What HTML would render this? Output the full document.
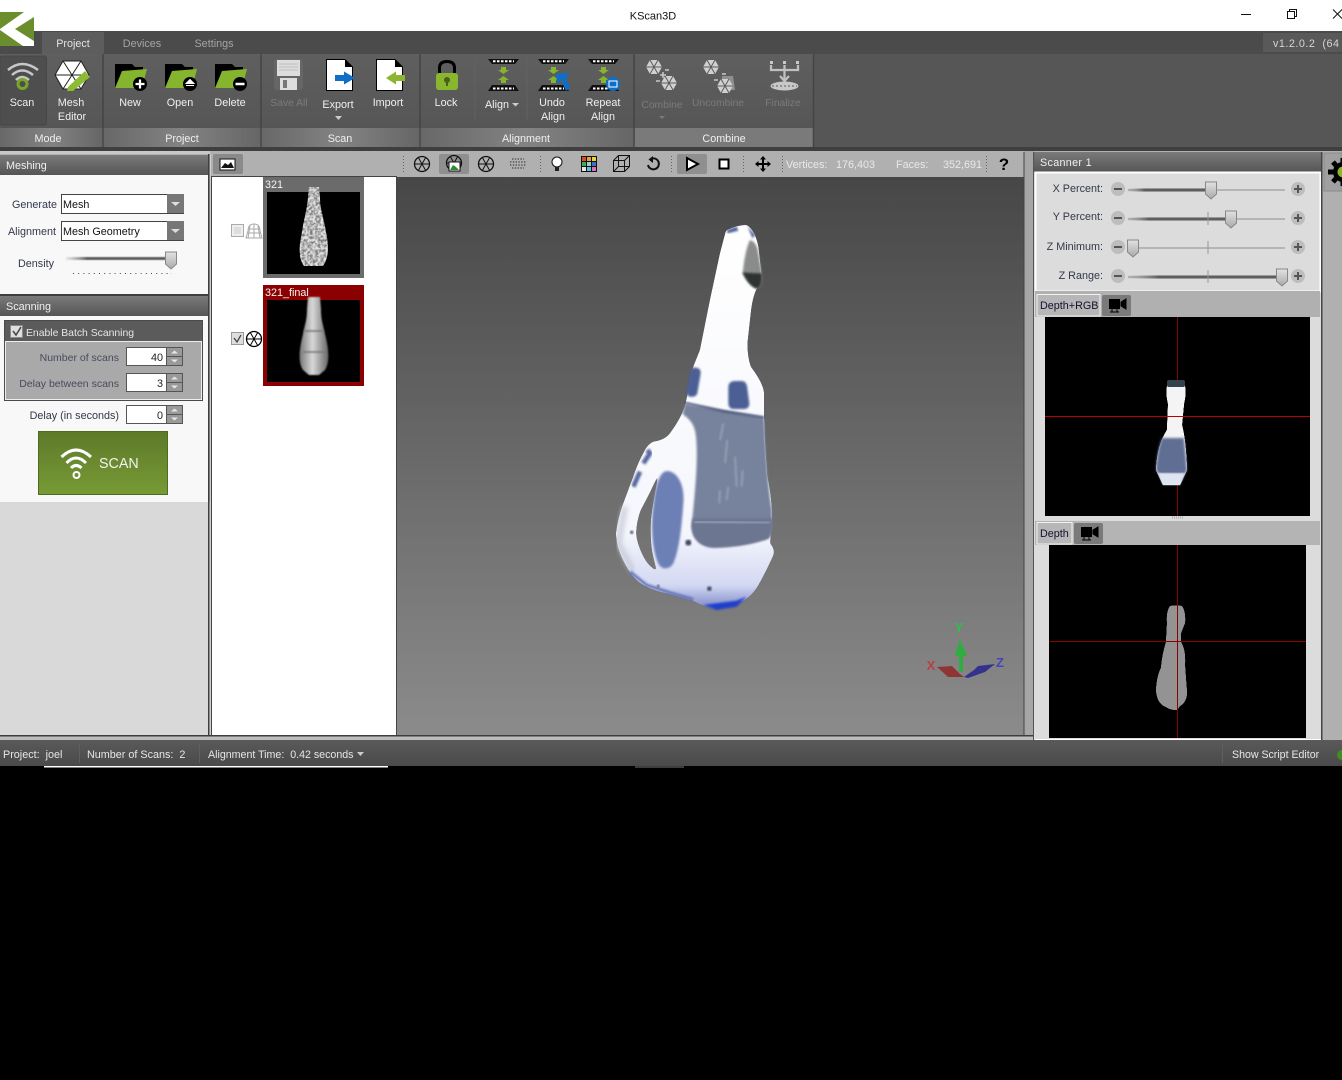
<!DOCTYPE html>
<html><head><meta charset="utf-8"><title>KScan3D</title>
<style>
html,body{margin:0;padding:0;background:#000;width:1342px;height:1080px;overflow:hidden}
svg{display:block;font-family:"Liberation Sans",sans-serif;font-size:10.8px}
.w{fill:#f0f0f0}.d{fill:#7d7d7d}.k{fill:#33384a}.m{text-anchor:middle}.e{text-anchor:end}.dis{fill:#7b7b7b;font-size:10.3px}
</style></head><body>
<svg width="1342" height="1080" viewBox="0 0 1342 1080" xmlns="http://www.w3.org/2000/svg">
<defs>
<linearGradient id="hdr" x1="0" y1="0" x2="0" y2="1"><stop offset="0" stop-color="#7a7a7a"/><stop offset="1" stop-color="#555"/></linearGradient>
<linearGradient id="rib" x1="0" y1="0" x2="0" y2="1"><stop offset="0" stop-color="#5f5f5f"/><stop offset="1" stop-color="#565656"/></linearGradient>
<linearGradient id="grp" x1="0" y1="0" x2="1" y2="0"><stop offset="0" stop-color="#686868"/><stop offset=".5" stop-color="#838383"/><stop offset="1" stop-color="#666"/></linearGradient>
<linearGradient id="vp" x1="0" y1="0" x2="0" y2="1"><stop offset="0" stop-color="#474747"/><stop offset="1" stop-color="#8b8b8b"/></linearGradient>
<linearGradient id="scan" x1="0" y1="0" x2="0" y2="1"><stop offset="0" stop-color="#5d7a2a"/><stop offset="1" stop-color="#789a35"/></linearGradient>
<linearGradient id="st" x1="0" y1="0" x2="0" y2="1"><stop offset="0" stop-color="#5a5a5a"/><stop offset="1" stop-color="#4a4a4a"/></linearGradient>
<linearGradient id="body" x1="0" y1="0" x2="0" y2="1"><stop offset="0" stop-color="#fff"/><stop offset=".8" stop-color="#f6f7fd"/><stop offset=".94" stop-color="#d3d8f2"/><stop offset="1" stop-color="#7d88c8"/></linearGradient>
<linearGradient id="thumb" x1="0" y1="0" x2="0" y2="1"><stop offset="0" stop-color="#e2e2e2"/><stop offset="1" stop-color="#a9a9a9"/></linearGradient>
<linearGradient id="trk" x1="0" y1="0" x2="1" y2="0"><stop offset="0" stop-color="#999" stop-opacity=".2"/><stop offset=".2" stop-color="#555"/><stop offset="1" stop-color="#555"/></linearGradient>
<linearGradient id="fin" x1="0" y1="0" x2="1" y2="0"><stop offset="0" stop-color="#777"/><stop offset=".45" stop-color="#d8d8d8"/><stop offset="1" stop-color="#666"/></linearGradient>
<filter id="b1" color-interpolation-filters="sRGB"><feGaussianBlur stdDeviation="1.2"/></filter>
<filter id="b2" color-interpolation-filters="sRGB"><feGaussianBlur stdDeviation=".7"/></filter>
<filter id="b3" color-interpolation-filters="sRGB"><feGaussianBlur stdDeviation="3"/></filter>
<filter id="b4" color-interpolation-filters="sRGB"><feGaussianBlur stdDeviation="8"/></filter>
<filter id="gooA" color-interpolation-filters="sRGB" x="-10%" y="-10%" width="120%" height="120%"><feGaussianBlur stdDeviation="3"/><feColorMatrix values="1 0 0 0 0 0 1 0 0 0 0 0 1 0 0 0 0 0 8 -3.400"/></filter>
<filter id="gooB" color-interpolation-filters="sRGB" x="-20%" y="-10%" width="140%" height="120%"><feGaussianBlur stdDeviation=".9"/><feColorMatrix values="1 0 0 0 0 0 1 0 0 0 0 0 1 0 0 0 0 0 10 -4"/></filter>
<filter id="sp" color-interpolation-filters="sRGB" x="0" y="0" width="100%" height="100%"><feTurbulence type="fractalNoise" baseFrequency=".38" numOctaves="2" seed="4"/><feColorMatrix values="0 0 0 0 0  0 0 0 0 0  0 0 0 0 0  2.600 0 0 0 -.7" result="n"/><feFlood flood-color="#e2e2e2"/><feComposite in2="n" operator="in" result="s"/><feMerge result="m"><feMergeNode in="SourceGraphic"/><feMergeNode in="s"/></feMerge><feComposite in="m" in2="SourceAlpha" operator="in"/></filter>
<g id="hex"><circle r="7.500" fill="none" stroke="currentColor" stroke-width="1.300"/><path d="M-3.700-6.500 3.700 6.500M3.700-6.500-3.700 6.500M-7.500 0H7.500" stroke="currentColor" stroke-width="1"/></g>
<g id="folder"><path d="M0 1H17L20 4H28V25H0Z" fill="#000"/><path d="M7 8 32 6 27 25H0Z" fill="#85b52f"/><circle cx="25" cy="21" r="7" fill="#000"/></g>
<g id="align"><path d="M0 0H31L27 5H4Z" fill="#111"/><path d="M4 26H27L31 32H0Z" fill="#111"/><path d="M5 2.200H26M5 29.500H26" stroke="#fff" stroke-width="2" stroke-dasharray="2.500 1.500" fill="none"/><path d="M13 8H18V11H21L15.500 15 10 11H13Z" fill="#85b52f"/><path d="M13 24H18V21H21L15.500 17 10 21H13Z" fill="#85b52f"/></g>
<g id="comb"><path d="M-4-7H4L8 0 4 7H-4L-8 0Z" fill="#d0d0d0"/><path d="M-4-7 4 7M4-7-4 7M-8 0H8" stroke="#5b5b5b"/></g>
<g id="cam"><rect x="0" y="0" width="29" height="21" rx="2" fill="#7a7a7a"/><rect x="7" y="4" width="11" height="10" fill="#000"/><path d="M19 7 24 4V14L19 11ZM8 17H17M10 14V17M15 14V17" fill="#000" stroke="#000"/></g>
<g id="plus"><circle r="7" fill="#bdbdbd"/><path d="M-4 0H4M0-4V4" stroke="#555" stroke-width="2"/></g>
<g id="minus"><circle r="7" fill="#bdbdbd"/><path d="M-4 0H4" stroke="#555" stroke-width="2"/></g>
<path id="th" d="M-5.500-8H5.500V4L0 9-5.500 4Z" fill="url(#thumb)" stroke="#888"/>
<g id="spin"><rect x="0" y="0" width="57" height="19" fill="#555"/><rect x="1" y="1" width="39" height="17" fill="#fff"/><rect x="41" y="1" width="15" height="8" fill="#999"/><rect x="41" y="10" width="15" height="8" fill="#999"/><path d="M45 6.500 48.500 3.500 52 6.500Z" fill="#e8e8e8"/><path d="M45 12.500 48.500 15.500 52 12.500Z" fill="#e8e8e8"/></g>
<g id="drop"><rect width="17" height="19" fill="#777"/><path d="M4 8H13L8.500 12Z" fill="#ddd"/></g>
</defs>

<!-- window -->
<rect width="1342" height="1080" fill="#000"/>
<rect width="1342" height="31" fill="#fff"/>
<text x="653" y="19.500" class="m" fill="#111" font-size="11">KScan3D</text>
<path d="M1241 14.500H1251" stroke="#111"/>
<path d="M1287.500 11.500H1294.500V18.500H1287.500ZM1289.500 11V9.500H1296.500V16.500H1295" fill="none" stroke="#111"/>
<path d="M1333 9.500 1342 18.500M1342 9.500 1333 18.500" stroke="#111"/>

<!-- tab bar -->
<rect y="31" width="1342" height="23" fill="#4b4b4b"/>
<rect x="42" y="32" width="62" height="22" fill="#5d5d5d"/>
<text x="73" y="47" class="m" fill="#e4e4e4">Project</text>
<text x="142" y="47" class="m" fill="#a5a5a5">Devices</text>
<text x="214" y="47" class="m" fill="#a5a5a5">Settings</text>
<rect x="1263" y="33" width="79" height="19" fill="#595959"/>
<text x="1273" y="47" fill="#d4d4d4" letter-spacing=".5" xml:space="preserve" style="white-space:pre">v1.2.0.2  (64 b</text>
<!-- logo -->
<rect y="12" width="34" height="34" fill="#6b8e2c"/>
<path d="M0 29 24 12H34V17L15 29 34 41V46H23L0 30Z" fill="#fff"/>

<!-- ribbon -->
<rect y="54" width="1342" height="94" fill="#565656"/>
<rect y="54" width="813" height="74" fill="url(#rib)"/>
<rect y="128" width="813" height="19" fill="#777"/>
<rect y="128" width="102" height="19" fill="url(#grp)"/>
<rect x="104" y="128" width="156" height="19" fill="url(#grp)"/>
<rect x="262" y="128" width="157" height="19" fill="url(#grp)"/>
<rect x="421" y="128" width="212" height="19" fill="url(#grp)"/>
<rect x="635" y="128" width="178" height="19" fill="#7a7a7a"/>
<path d="M103 54V147M261 54V147M420 54V147M634 54V147M813.500 54V147" stroke="#444" stroke-width="1.500"/>
<path d="M475 58V120M527 58V120" stroke="#626262"/>
<text x="48" y="142" class="m w">Mode</text><text x="182" y="142" class="m w">Project</text><text x="340" y="142" class="m w">Scan</text><text x="526" y="142" class="m w">Alignment</text><text x="724" y="142" class="m w">Combine</text>

<!-- Scan btn -->
<rect x="0" y="56" width="46.500" height="69" rx="2" fill="#4e4e4e" stroke="#474747"/>
<path d="M8 70Q22 58 38 70M12 75Q22 66 33 75M16 80Q22 74 29 80" fill="none" stroke="#c7c7c7" stroke-width="2.500"/>
<circle cx="22.500" cy="84" r="4.500" fill="none" stroke="#7ca52b" stroke-width="3"/>
<text x="22" y="106" class="m w">Scan</text>
<!-- Mesh editor -->
<g transform="translate(72,75)"><path d="M-9-14H9L17 0 9 14H-9L-17 0Z" fill="#fff" stroke="#222"/><path d="M-9-14 9 14M9-14-9 14M-17 0H17" stroke="#222"/><path d="M-4 12 13-4 18 2 1 16-5 16Z" fill="#8dbb33"/></g>
<text x="71" y="106" class="m w">Mesh</text><text x="72" y="120" class="m w">Editor</text>
<!-- folders -->
<use href="#folder" x="115" y="63"/><path d="M135.500 84H144.500M140 79.500V88.500" stroke="#fff" stroke-width="2.200"/>
<text x="130" y="106" class="m w">New</text>
<use href="#folder" x="165" y="63"/><path d="M186 83.500 190 79.500 194 83.500ZM186 85.500H194" fill="#fff" stroke="#fff"/>
<text x="180" y="106" class="m w">Open</text>
<use href="#folder" x="215" y="63"/><path d="M235.500 84H244.500" stroke="#fff" stroke-width="2.500"/>
<text x="230" y="106" class="m w">Delete</text>
<!-- Save -->
<rect x="274" y="59" width="29" height="31" rx="3" fill="#666"/>
<rect x="277" y="60" width="23" height="16" fill="#ddd"/><path d="M279 64H298M279 67H298M279 70H298" stroke="#bdbdbd"/>
<rect x="280" y="78" width="17" height="12" fill="#ddd"/><rect x="283" y="80" width="4" height="8" fill="#777"/>
<text x="289" y="106" class="m dis">Save All</text>
<!-- Export -->
<path d="M326.500 59.500H345L352.500 67V90.500H326.500Z" fill="#fff" stroke="#000"/><path d="M345 59.500V67H352.500Z" fill="#000"/>
<path d="M335 75H344V71.500L355 78 344 84.500V81H335Z" fill="#0f6fc6"/>
<text x="338" y="108" class="m w">Export</text><path d="M335 116H342L338.500 120Z" fill="#ccc"/>
<!-- Import -->
<path d="M376.500 59.500H395L402.500 67V90.500H376.500Z" fill="#fff" stroke="#000"/><path d="M395 59.500V67H402.500Z" fill="#000"/>
<path d="M405 75H396V71.500L386 78 396 84.500V81H405Z" fill="#8ab52f"/>
<text x="388" y="106" class="m w">Import</text>
<!-- Lock -->
<path d="M439.500 74V68Q439.500 61.500 447 61.500T454.500 68V74" fill="none" stroke="#000" stroke-width="3"/>
<rect x="436" y="73" width="22" height="17" rx="3" fill="#8ab52f"/><circle cx="447" cy="80" r="3" fill="#47601a"/><rect x="446" y="81" width="2" height="5" fill="#47601a"/>
<text x="446" y="106" class="m w">Lock</text>
<!-- Align -->
<use href="#align" x="488" y="59"/><text x="497" y="108" class="m w">Align</text><path d="M512 103H519L515.500 106.500Z" fill="#ccc"/>
<use href="#align" x="538" y="59"/><path d="M556 74 570 73 566 78 570 88 566 91 561 80 557 84Z" fill="#0f6fc6"/><text x="552" y="106" class="m w">Undo</text><text x="553" y="120" class="m w">Align</text>
<use href="#align" x="588" y="59"/><circle cx="613" cy="84" r="7" fill="#0f6fc6"/><rect x="609" y="81" width="8" height="6" fill="none" stroke="#fff"/><text x="603" y="106" class="m w">Repeat</text><text x="603" y="120" class="m w">Align</text>
<!-- Combine -->
<use href="#comb" x="654" y="67"/><use href="#comb" x="669" y="83"/><path d="M660 75H666M663 72V78M656 81H660M665 70H669" stroke="#c8c8c8" stroke-width="1.500"/>
<text x="662" y="108" class="m dis">Combine</text><path d="M659 116H665L662 119Z" fill="#7b7b7b"/>
<use href="#comb" x="711" y="67"/><path d="M722 74H726M714 80H718" stroke="#c8c8c8" stroke-width="1.500"/><path d="M722 76H733L735 90H721Z" fill="#8f8f8f"/><use href="#comb" x="725" y="86"/>
<text x="718" y="106" class="m dis">Uncombine</text>
<path d="M770 61H773V64H770ZM783 61H786V64H783ZM796 61H799V64H796Z" fill="#c8c8c8"/>
<path d="M771 65V70H798V65M784.500 65V80M780 76 784.500 81 789 76" fill="none" stroke="#c0c0c0" stroke-width="2.300"/>
<ellipse cx="784.500" cy="86" rx="14" ry="4.500" fill="#c8c8c8"/><path d="M772 86H797" stroke="#5b5b5b" stroke-dasharray="2 2"/>
<text x="783" y="106" class="m dis">Finalize</text>

<rect y="147" width="1342" height="4" fill="#3f3f3f"/>
<!-- main bg -->
<rect y="151" width="1342" height="584" fill="#b0b0b0"/>
<rect x="1024" y="151" width="10" height="589" fill="#a6a6a6"/>
<rect y="151" width="210" height="3" fill="#c9c9c9"/>

<!-- left panel -->
<rect y="502" width="210" height="233" fill="#d9d9d9"/>
<rect y="155" width="208" height="20" fill="url(#hdr)"/>
<text x="6" y="169" class="w">Meshing</text>
<rect y="175" width="208" height="119" fill="#f8f8f8"/>
<text x="57" y="208" class="e k">Generate</text>
<rect x="61.500" y="194.500" width="122" height="19" fill="#fff" stroke="#444"/><text x="63" y="208" fill="#111">Mesh</text><use href="#drop" x="167" y="194"/>
<text x="56" y="235" class="e k">Alignment</text>
<rect x="61.500" y="221.500" width="122" height="19" fill="#fff" stroke="#444"/><text x="63" y="235" fill="#111">Mesh Geometry</text><use href="#drop" x="167" y="221"/>
<text x="18" y="267" class="k">Density</text>
<rect x="66" y="257" width="106" height="3" fill="url(#trk)" filter="url(#b2)"/>
<use href="#th" x="171" y="260"/>
<path d="M73 273.500H172" stroke="#444" stroke-dasharray="1 4.200"/>
<rect y="294" width="208" height="2" fill="#3f3f3f"/>
<rect y="296" width="208" height="20" fill="url(#hdr)"/>
<text x="6" y="310" class="w">Scanning</text>
<rect y="316" width="208" height="186" fill="#f8f8f8"/>
<rect x="4.500" y="320.500" width="198" height="80" fill="#a9a9a9" stroke="#4a4a4a"/>
<rect x="5" y="321" width="197" height="20" fill="#5b5b5b"/>
<rect x="5.500" y="341.500" width="196" height="58" fill="#a9a9a9" stroke="#eee"/>
<rect x="10.500" y="325.500" width="12" height="12" fill="#dedede" stroke="#888"/><path d="M13 331 16 335 21 327" fill="none" stroke="#444" stroke-width="1.500"/>
<text x="26" y="336" fill="#e6e6e6" font-size="10.400">Enable Batch Scanning</text>
<text x="119" y="361" class="e" fill="#454c5c" font-size="10.500">Number of scans</text><use href="#spin" x="126" y="347"/><text x="163" y="361" class="e" fill="#222">40</text>
<text x="119" y="387" class="e" fill="#454c5c" font-size="10.500">Delay between scans</text><use href="#spin" x="126" y="373"/><text x="163" y="387" class="e" fill="#222">3</text>
<text x="119" y="419" class="e k">Delay (in seconds)</text><use href="#spin" x="126" y="405"/><text x="163" y="419" class="e" fill="#222">0</text>
<rect x="38.500" y="431.500" width="129" height="63" fill="url(#scan)" stroke="#4e6b1e"/>
<path d="M61.500 457Q76 443 91 457M66.500 463Q76 453 86 463M71 468Q76 463 81.500 468" fill="none" stroke="#fff" stroke-width="3"/>
<circle cx="76.500" cy="475" r="3" fill="none" stroke="#fff" stroke-width="2"/>
<text x="99" y="468" fill="#f2f2f2" font-size="14.300">SCAN</text>
<rect x="208" y="154" width="1.500" height="581" fill="#3f3f3f"/>
<rect x="210" y="154" width="1" height="581" fill="#cfcfcf"/>

<!-- toolbar -->
<rect x="213" y="154" width="30" height="20" rx="2" fill="#8a8a8a"/>
<rect x="220" y="159" width="15" height="11" fill="#fff" stroke="#111"/><path d="M221 168 225 163 228 165 231 162 234 168Z" fill="#111"/>
<g color="#111">
<path d="M403.500 156V172M540.500 156V172M671.500 156V172M743.500 156V172M782.500 156V172M986.500 156V172" stroke="#666" stroke-dasharray="1 2"/>
<use href="#hex" x="422" y="164"/>
<rect x="439" y="154" width="30" height="20" rx="2" fill="#8f8f8f"/>
<use href="#hex" x="454" y="163"/><rect x="449" y="162" width="11" height="9" fill="#fff" stroke="#111"/><path d="M450 170 453 165 456 167 459 170Z" fill="#2e8b2e"/>
<use href="#hex" x="486" y="164"/>
<g fill="none" stroke="#555" stroke-width="1.400" stroke-dasharray="1.400 1.400"><path d="M512 159H524M510 162H526M510 165H526M512 168H524"/></g>
<circle cx="557" cy="162" r="5" fill="#fff" stroke="#111"/><path d="M555 167H559V171H555Z" fill="#222"/>
<g><rect x="581" y="156" width="16" height="16" fill="#111"/>
<rect x="582" y="157" width="4" height="4" fill="#d94b2b"/><rect x="587" y="157" width="4" height="4" fill="#e9a030"/><rect x="592" y="157" width="4" height="4" fill="#e8d23c"/>
<rect x="582" y="162" width="4" height="4" fill="#48a84a"/><rect x="587" y="162" width="4" height="4" fill="#8bd7d0"/><rect x="592" y="162" width="4" height="4" fill="#3e6fc4"/>
<rect x="582" y="167" width="4" height="4" fill="#e7e7e7"/><rect x="587" y="167" width="4" height="4" fill="#5ec0e0"/><rect x="592" y="167" width="4" height="4" fill="#df6fb8"/></g>
<path d="M613.500 160.500H624.500V171.500H613.500ZM613.500 160.500 618.500 155.500H629.500V166.500L624.500 171.500M624.500 160.500 629.500 155.500M613.500 171.500 618.500 166.500H629.500M618.500 155.500V166.500" fill="none" stroke="#111"/>
<path d="M650 159.500A5.500 5.500 0 1 1 648 165" fill="none" stroke="#111" stroke-width="2"/><path d="M653 156V163L648.500 159.500Z" fill="#111"/>
<rect x="677" y="154" width="30" height="20" rx="2" fill="#8f8f8f"/>
<path d="M687 158V170L698 164Z" fill="#fff" stroke="#000" stroke-width="2"/>
<rect x="719.500" y="159.500" width="9" height="9" fill="#fff" stroke="#000" stroke-width="2"/>
<path d="M763 157.500V170.500M756.500 164H769.500" stroke="#000" stroke-width="2"/><path d="M763 156 766 159.500H760ZM763 172 766 168.500H760ZM755 164 758.500 161V167ZM771 164 767.500 161V167Z" fill="#000"/>
</g>
<text x="786" y="168" fill="#e9e9e9">Vertices:</text><text x="836" y="168" fill="#e9e9e9">176,403</text>
<text x="896" y="168" fill="#e9e9e9">Faces:</text><text x="943" y="168" fill="#e9e9e9">352,691</text>
<text x="1004" y="170" class="m" fill="#000" font-size="17" font-weight="bold">?</text>

<!-- list -->
<rect x="211.500" y="176.500" width="185" height="559" fill="#fff" stroke="#444"/>
<rect x="263" y="177" width="101" height="101" fill="#6b6b6b"/>
<rect x="267" y="192" width="93" height="82" fill="#000"/>
<text x="265" y="188" fill="#f4f4f4" font-size="10.800">321</text>
<path d="M309 187H319L320 197C320 210 324 218 326 232 329 245 329 258 323 266H304C298 258 299 245 302 232 304 218 307 210 308 197Z" fill="#777" filter="url(#sp)"/>
<rect x="263" y="285" width="101" height="101" fill="#8b0000"/>
<rect x="267" y="300" width="93" height="82" fill="#000"/>
<text x="265" y="296" fill="#f4f4f4" font-size="10.800">321_final</text>
<path d="M308 297H320L321 309C321 320 323 324 325 334 329 350 330 362 325 370L319 375H309L303 370C298 362 299 350 303 334 305 324 307 320 307 309Z" fill="url(#fin)" filter="url(#b2)"/>
<path d="M304 331H324M303 352H326" stroke="#777" stroke-width="1.500" filter="url(#b2)"/>
<rect x="231.500" y="224.500" width="12" height="12" fill="#eee" stroke="#aaa"/>
<rect x="234" y="227" width="7" height="7" fill="#ddd"/>
<path d="M254 224Q260 224 260 231L262 238H246L248 231Q248 224 254 224ZM248 229H260M247 233H261M254 224V238M250 226 248 238M258 226 260 238" fill="none" stroke="#aaa"/>
<rect x="231.500" y="332.500" width="12" height="12" fill="#dedede" stroke="#999"/><path d="M234 338 237 342 241 335" fill="none" stroke="#444" stroke-width="1.300"/>
<g transform="translate(254,339)" color="#000"><use href="#hex"/></g>

<!-- viewport -->
<rect x="397" y="177" width="627" height="558" fill="url(#vp)"/>
<rect x="1023.500" y="152" width="1" height="584" fill="#444"/>

<!-- model -->
<g transform="translate(590,210) scale(.33333)">
<path fill-rule="evenodd" fill="url(#body)" filter="url(#gooA)" d="M408 62Q440 45 470 45 495 60 505 110L515 200Q515 225 500 235 488 260 483 300L472 400Q472 440 482 470 520 520 522 550L522 620Q525 720 532 800 548 880 545 930L540 1000Q558 1020 548 1040 525 1090 505 1125 485 1160 450 1178 410 1198 370 1195 330 1185 310 1172L240 1152Q200 1145 170 1130 135 1115 110 1070 80 1020 78 970 85 920 100 880L130 800Q145 755 160 730 170 705 190 695 225 690 240 670 270 630 285 590L310 470Q320 445 330 420L360 270 390 130Z M208 785Q190 870 183 930 180 1000 190 1040L200 1082Q175 1070 160 1040 140 1000 138 970 140 930 152 900 185 840 208 785Z"/>
<path d="M232 783C265 785 285 830 280 880 275 950 268 1020 250 1060 240 1078 215 1082 205 1060 190 1030 180 960 190 890 195 840 205 783 232 783Z" fill="#6d80b6" filter="url(#b3)"/>
<path d="M285 582 522 622C528 720 530 800 545 900 548 950 545 975 535 985 480 1005 420 1012 370 1012 330 1010 305 985 305 945 315 850 325 750 318 680 315 640 295 625 278 612Z" fill="#77829c" filter="url(#b3)"/>
<path d="M308 925 545 925C548 950 545 975 535 985 480 1005 420 1012 370 1012 330 1010 305 985 305 945Z" fill="#6c7690" filter="url(#b3)"/>
<path d="M312 935 540 940" stroke="#8d97ad" stroke-width="10" filter="url(#b3)"/>
<path d="M400 640 390 690M412 690 405 760M435 740 440 830M458 780 455 830M390 840 388 880M415 830 410 870" stroke="#a5adbd" stroke-width="4" fill="none" filter="url(#b3)"/>
<path d="M285 578 400 603 522 622" fill="none" stroke="#2d3a66" stroke-width="5" filter="url(#b3)"/>
<path d="M312 473Q333 472 332 490L322 550Q318 562 300 560 288 558 290 540L300 490Q303 473 312 473Z" fill="#4c5f95" filter="url(#b3)"/>
<path d="M435 513H455Q470 513 472 535L478 580Q478 597 460 597H432Q416 597 415 580L415 530Q417 513 435 513Z" fill="#4c5f95" filter="url(#b3)"/>
<path d="M480 90Q500 95 505 130L517 200Q518 235 498 235 475 225 458 190 465 120 480 90Z" fill="#8a8c8c" filter="url(#b3)"/>
<path d="M458 187Q485 190 515 190 518 235 498 235 475 225 458 187Z" fill="#2e3330" filter="url(#b3)"/>
<path d="M412 60 440 50 445 62 412 70Z" fill="#4a5d94" filter="url(#b3)"/><path d="M472 48 495 75 488 85Z" fill="#4a5d94" filter="url(#b3)"/>
<path d="M340 1185 440 1172 470 1160 440 1190 380 1200Z" fill="#1f3fc9" filter="url(#b3)"/>
<path d="M172 720 180 730 160 760M150 785 130 830" fill="none" stroke="#5668a0" stroke-width="14" filter="url(#b3)"/>
<path d="M105 890 85 1000 130 1085" fill="none" stroke="#c3c7d4" stroke-width="14" filter="url(#b4)"/>
<path d="M120 1085 170 1125 240 1148 310 1168" fill="none" stroke="#5f6eb6" stroke-width="8" filter="url(#b3)"/>
<circle cx="295" cy="998" r="9" fill="#3c4157" filter="url(#b3)"/><circle cx="358" cy="1136" r="7" fill="#3c4157" filter="url(#b3)"/><circle cx="125" cy="967" r="5" fill="#3c4157" filter="url(#b3)"/><circle cx="205" cy="1128" r="4" fill="#3c4157" filter="url(#b3)"/>
</g>

<!-- axis -->
<text x="959" y="632" class="m" fill="#2fbf48" font-size="13" font-weight="bold">Y</text>
<text x="931" y="670" class="m" fill="#b84040" font-size="13" font-weight="bold">X</text>
<text x="1000" y="667" class="m" fill="#4545b8" font-size="13" font-weight="bold">Z</text>
<path d="M937 667 952 666 960 674 964 677 948 677Z" fill="#8e3636"/>
<path d="M964 677 974 670 978 666 995 664 985 672 968 678Z" fill="#33338e"/>
<path d="M960 639 967 656H963V672H959V656H955Z" fill="#2fae3f"/>

<!-- status top strip (left part only) -->
<rect y="735" width="1034" height="1.500" fill="#3d3d3d"/>
<rect y="736.500" width="1034" height="3.500" fill="#bdbdbd"/>

<!-- right panel -->
<rect x="1034" y="152" width="288" height="20" fill="url(#hdr)"/>
<text x="1040" y="166" class="w" letter-spacing=".3">Scanner 1</text>
<rect x="1034" y="172" width="288" height="568" fill="#fff"/>
<rect x="1035" y="173" width="286" height="566" fill="#dcdcdc"/>
<rect x="1035.500" y="172.500" width="285" height="119" fill="#dcdcdc" stroke="#fff" stroke-width="2"/>
<rect x="1321" y="152" width="1.500" height="588" fill="#444"/>
<rect x="1033" y="152" width="1.200" height="588" fill="#555"/>
<text x="1103" y="192" class="e k">X Percent:</text><text x="1103" y="220" class="e k">Y Percent:</text><text x="1103" y="250" class="e k">Z Minimum:</text><text x="1103" y="279" class="e k">Z Range:</text>
<path d="M1128 190H1285M1128 219H1285M1128 248H1285M1128 277H1285" stroke="#a8a8a8" stroke-width="1.500"/>
<rect x="1128" y="188.500" width="83" height="3" fill="url(#trk)" filter="url(#b2)"/>
<rect x="1128" y="217.500" width="103" height="3" fill="url(#trk)" filter="url(#b2)"/>
<rect x="1128" y="275.500" width="154" height="3" fill="url(#trk)" filter="url(#b2)"/>
<path d="M1208 212V225M1208 241V254M1208 270V283" stroke="#999"/>
<use href="#minus" x="1118" y="189"/><use href="#plus" x="1298" y="189"/>
<use href="#minus" x="1118" y="218"/><use href="#plus" x="1298" y="218"/>
<use href="#minus" x="1118" y="247"/><use href="#plus" x="1298" y="247"/>
<use href="#minus" x="1118" y="276"/><use href="#plus" x="1298" y="276"/>
<use href="#th" x="1211" y="190"/><use href="#th" x="1231" y="219"/><use href="#th" x="1133" y="248"/><use href="#th" x="1282" y="277"/>

<rect x="1035" y="291" width="285" height="26" fill="#b0b0b0"/>
<rect x="1037" y="294.500" width="63" height="21.500" fill="#b7b7b7" stroke="#f2f2f2"/>
<text x="1040" y="309" fill="#12122e">Depth+RGB</text>
<use href="#cam" x="1102" y="295"/>
<rect x="1045" y="317" width="265" height="199" fill="#000"/>
<path d="M1177.500 317V516" stroke="#8b0000"/>
<path d="M1168 381H1184Q1187 392 1184 404L1182 425Q1186 440 1187 470L1180 485H1163L1156 470Q1157 445 1167 430L1168 404Q1165 392 1168 381Z" fill="#f4f4f4" filter="url(#gooB)"/>
<rect x="1167" y="380" width="18" height="7" rx="2" fill="#33424f"/>
<path d="M1162 438H1184L1187 470 1181 481H1163L1156 470Q1157 450 1162 438Z" fill="#5f6e92" filter="url(#b1)"/>
<path d="M1158 473H1185L1180 485H1163Z" fill="#dfe4f3" filter="url(#b2)"/>
<path d="M1045 416.500H1310" stroke="#c00000"/>
<path d="M1172 517.500H1184" stroke="#bbb" stroke-dasharray="1 1" stroke-width="3"/>
<rect x="1035" y="521" width="285" height="24" fill="#b4b4b4"/>
<rect x="1037" y="522.500" width="35" height="21.500" fill="#b7b7b7" stroke="#f2f2f2"/>
<text x="1040" y="537" fill="#12122e">Depth</text>
<use href="#cam" x="1074" y="523"/>
<rect x="1049" y="545" width="257" height="193" fill="#000"/>
<path d="M1170 606Q1176 605 1182 606 1186 612 1185 623L1181 633V642Q1186 650 1185 665 1186 680 1187 692 1187 702 1180 706L1177 710Q1170 710 1166 707 1157 704 1156 690 1157 675 1161 668 1162 655 1166 642L1167 623Q1166 612 1170 606Z" fill="#939393" filter="url(#gooB)"/>
<path d="M1049.500 641.500H1306M1177.500 545V738" stroke="#8b0000"/>

<!-- gear -->
<rect x="1322.500" y="151" width="19.500" height="589" fill="#b0b0b0"/>
<rect x="1324" y="153" width="18" height="38" fill="#a0a0a0" stroke="#8a8a8a"/>
<circle cx="1343" cy="172" r="10" fill="#000"/>
<path d="M1343 158V186M1328 172H1343M1333 162 1350 182M1333 182 1350 162" stroke="#000" stroke-width="5"/>
<circle cx="1343" cy="172" r="5.500" fill="#8ab52f"/>

<!-- status -->
<rect y="740" width="1342" height="26" fill="url(#st)"/>
<text x="3" y="758" fill="#e6e6e6" xml:space="preserve" style="white-space:pre">Project:  joel</text>
<text x="87" y="758" fill="#e6e6e6" xml:space="preserve" style="white-space:pre">Number of Scans:  2</text>
<text x="208" y="758" fill="#e6e6e6" xml:space="preserve" font-size="10.650" style="white-space:pre">Alignment Time:  0.42 seconds</text>
<path d="M357 752H364L360.500 756Z" fill="#ccc"/>
<path d="M79.500 744V763M199.500 744V763M1222.500 744V763" stroke="#5f5f5f"/>
<text x="1232" y="758" fill="#e6e6e6" font-size="10.600">Show Script Editor</text>
<circle cx="1342" cy="755" r="5" fill="#3f8f22"/>
<rect x="44" y="766" width="344" height="1.500" fill="#fff"/>
<rect x="635" y="766" width="49" height="2" fill="#3d3d3d"/>
</svg>
</body></html>
